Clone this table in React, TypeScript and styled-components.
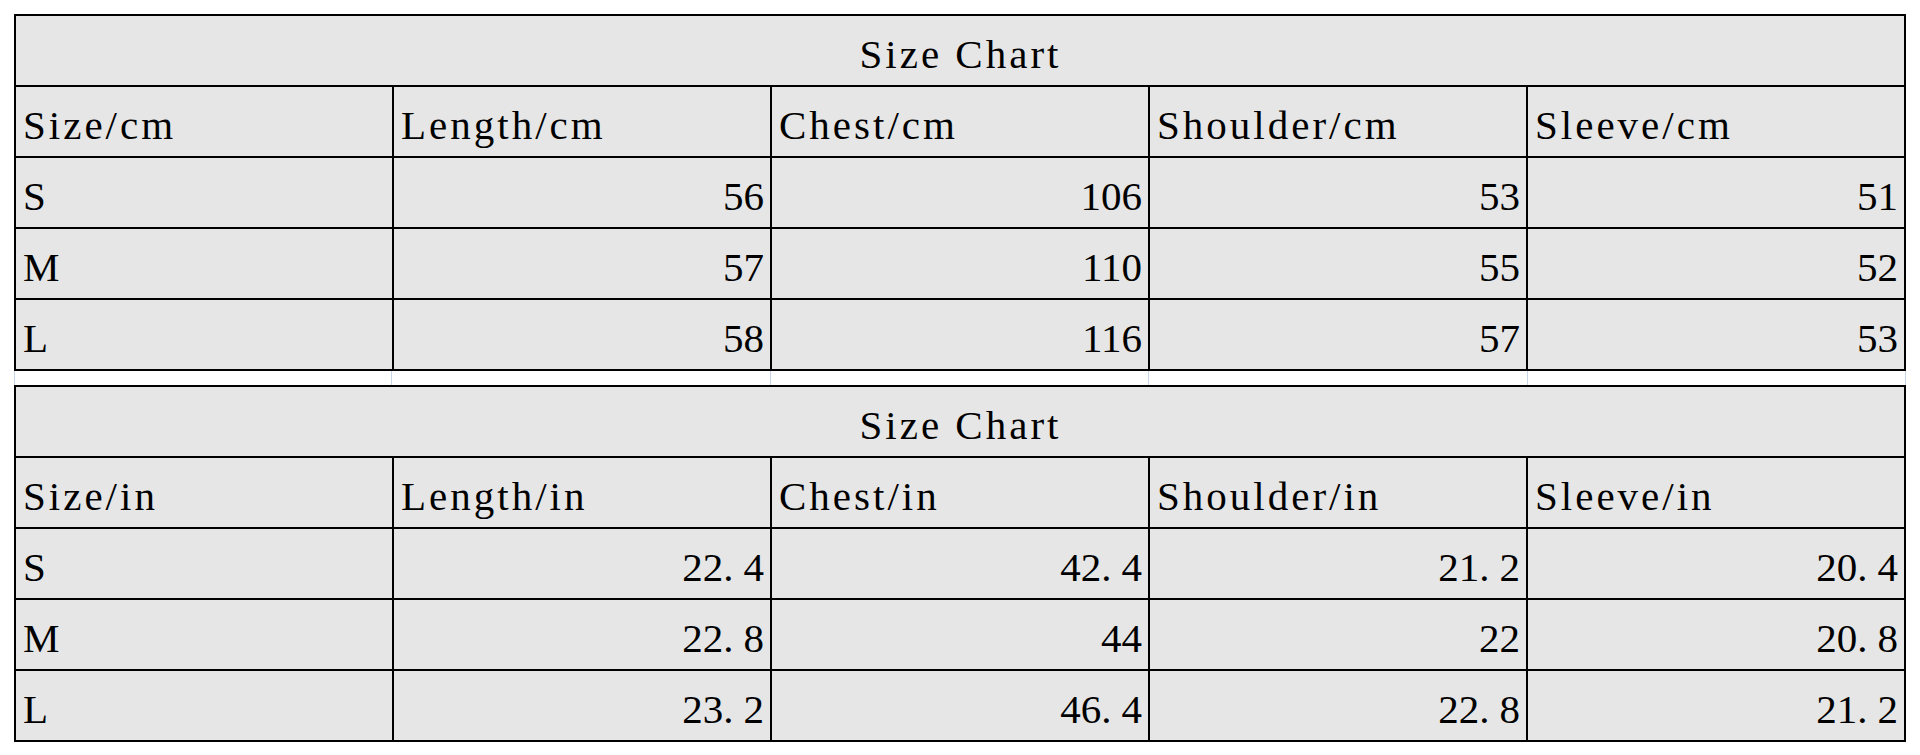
import React from 'react';
import styled, { createGlobalStyle } from 'styled-components';

const GlobalStyle = createGlobalStyle`
  html, body {
    margin: 0;
    padding: 0;
    background: #ffffff;
  }
`;

const Page = styled.div`
  padding: 14px 0 0 14px;
  width: 1892px;
  display: flex;
  flex-direction: column;
  color: #000;
`;

const Table = styled.table`
  width: 1892px;
  border-collapse: collapse;
  table-layout: fixed;
  background: #e6e6e6;
  border: 2px solid #000;
`;

const Row = styled.tr`
  height: 71px;
`;

const Cell = styled.td<{ $align?: 'left' | 'right' | 'center'; $spaced?: boolean }>`
  border: 2px solid #000;
  padding: 0 6px 11px 7px;
  vertical-align: bottom;
  text-align: ${(p) => p.$align || 'left'};
  font-family: "Liberation Serif", "Times New Roman", Times, "DejaVu Serif", serif;
  font-size: 41px;
  line-height: 40px;
  color: #000;
  letter-spacing: ${(p) => (p.$spaced ? '3px' : '0')};
  white-space: nowrap;
  overflow: hidden;
`;

const Dot = styled.span`
  margin-right: 10px;
`;

const Gap = styled.div`
  height: 14px;
  display: grid;
  grid-template-columns: repeat(5, 1fr);
`;

const GapCell = styled.div`
  border-right: 1px solid #c9d5e8;
  &:first-child {
    border-left: 1px solid #c9d5e8;
  }
`;

type Chart = {
  unit: string;
  rows: [string, string[]][];
};

const charts: Chart[] = [
  {
    unit: 'cm',
    rows: [
      ['S', ['56', '106', '53', '51']],
      ['M', ['57', '110', '55', '52']],
      ['L', ['58', '116', '57', '53']],
    ],
  },
  {
    unit: 'in',
    rows: [
      ['S', ['22.4', '42.4', '21.2', '20.4']],
      ['M', ['22.8', '44', '22', '20.8']],
      ['L', ['23.2', '46.4', '22.8', '21.2']],
    ],
  },
];

const headings = ['Size', 'Length', 'Chest', 'Shoulder', 'Sleeve'];

const Num = ({ v }: { v: string }) => {
  const [a, b] = v.split('.');
  if (b === undefined) return <>{a}</>;
  return (
    <>
      {a}
      <Dot>.</Dot>
      {b}
    </>
  );
};

const SizeTable = ({ chart }: { chart: Chart }) => (
  <Table>
    <tbody>
      <Row>
        <Cell colSpan={5} $align="center" $spaced>
          Size Chart
        </Cell>
      </Row>
      <Row>
        {headings.map((h) => (
          <Cell key={h} $spaced>
            {h}/{chart.unit}
          </Cell>
        ))}
      </Row>
      {chart.rows.map(([size, values]) => (
        <Row key={size}>
          <Cell>{size}</Cell>
          {values.map((v, i) => (
            <Cell key={i} $align="right">
              <Num v={v} />
            </Cell>
          ))}
        </Row>
      ))}
    </tbody>
  </Table>
);

export default function App() {
  return (
    <>
      <GlobalStyle />
      <Page>
        <SizeTable chart={charts[0]} />
        <Gap>
          {headings.map((h) => (
            <GapCell key={h} />
          ))}
        </Gap>
        <SizeTable chart={charts[1]} />
      </Page>
    </>
  );
}
